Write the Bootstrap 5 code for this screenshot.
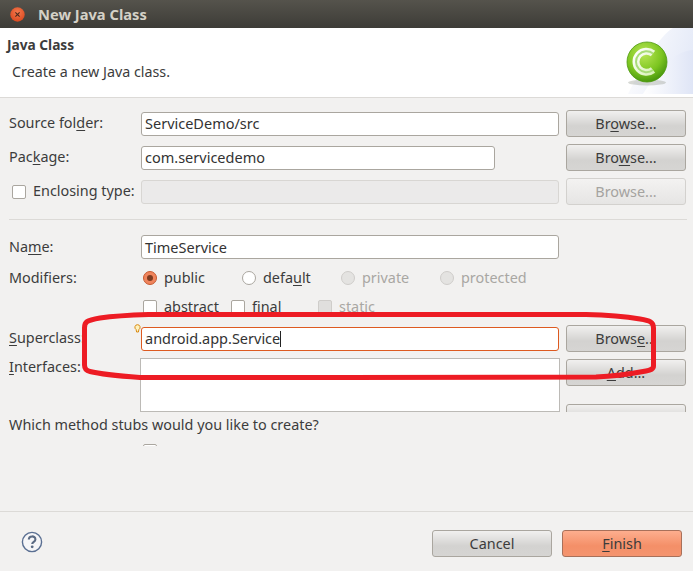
<!DOCTYPE html>
<html lang="en"><head><meta charset="utf-8"><title>New Java Class</title>
<link href="https://cdn.jsdelivr.net/npm/bootstrap@5.3.0/dist/css/bootstrap.min.css" rel="stylesheet">
<style>
html,body{margin:0;height:100%;background:#f2f1f0}
body{font-family:"Noto Sans","Open Sans",sans-serif;font-size:14.4px;color:#3c3c3c;line-height:1;overflow:hidden}
.dlg{position:relative;width:693px;height:571px}
.tbar{height:28px;background:linear-gradient(#55534c,#3d3c37);padding-left:10px;gap:13px}
.tbar b{font-weight:700;color:#d4d1c7;font-size:14.7px}
.xbtn{width:15px;height:15px;flex:none}
.banner{height:69px;background:#fff;position:relative;overflow:hidden;padding:9px 0 0 7px}
.banner h1{font-size:13.7px;font-weight:700;margin:0;color:#3c3c3c}
.banner p{margin:12px 0 0 5px;font-size:14.3px}
.swoosh{position:absolute;right:0;top:0}
.hr1{height:1px;background:#dcdad7;flex:none}
.form{height:413px;padding:12px 7px 0 9px;overflow:hidden;flex:none}
.frow{height:27px;margin-bottom:7px}
.lbl{width:132px;flex:none;white-space:nowrap}
.enc{padding-left:3px;gap:7px}
.fld{height:24px;width:418px;flex:none;border:1px solid #aaa69f;border-radius:3px;background:#fff;padding:0 3px;display:flex;align-items:center;font-size:14.5px;color:#333}
.fld.short{width:354px;margin-right:64px}
.fld.off{background:#ebeaea;border-color:#d8d6d3}
.fld.focus{border-color:#dd5a20}
.caret{display:inline-block;width:1px;height:16px;background:#222}
.wbtn{width:120px;height:27px;margin-left:7px;flex:none;border:1px solid #aaa69f;border-radius:3px;background:linear-gradient(#f1f0ef,#d3d2d0 60%,#d6d5d3);color:#3c3c3c;font-size:14.4px;padding:2px 0 0;line-height:1}
.wbtn.off{color:#a5a3a0;background:linear-gradient(#f3f2f1,#e6e5e4);border-color:#d3d1ce;opacity:1}
.wbtn.go{background:linear-gradient(#fdae8e,#f48f68 60%,#f4946f);border-color:#a8705a}
.sep{height:1px;background:#dcdad7;margin:14px 0;width:678px}
.rb,.cb{flex:none;display:inline-block;background:#fff;border:1px solid #aaa69f}
.rb{width:14px;height:14px;border-radius:50%;position:relative}
.rb.on{background:#f0845c;border-color:#c65a30}
.rb.on::after{content:"";position:absolute;left:3px;top:3px;width:6px;height:6px;border-radius:50%;background:#7d3b20}
.rb.off{background:#e4e3e1;border-color:#cfcdca}
.cb{width:14px;height:14px;border-radius:2px}
.cb.off{background:#e0dfdd;border-color:#cfcdca}
.dim{color:#a9a7a3}
.namerow{height:26px;margin-bottom:10px}
.mod{height:16px;margin-bottom:13px}
.mod.last{margin-bottom:10px}
.opts{margin-left:2px}
.opt{gap:7px}
.w99{width:99px}
.w88{width:88px}
.w87{width:87px}
.u{text-decoration:underline;text-underline-offset:2px}
.srow{margin-bottom:6px}
.irow{height:54px}
.ilbl{padding-top:2px}
.box{width:420px;height:54px;margin-left:-1px;margin-right:6px;flex:none;background:#fff;border:1px solid #bcbab6}
.bcol{overflow:hidden;height:54px}
.bcol .wbtn{margin-left:0;margin-top:1px}
.bcol .wbtn+.wbtn{margin-top:18px}
.qline{margin-top:6px}
.clip{height:2px;overflow:hidden;margin:12px 0 0 134px}
.clipin{gap:12px;white-space:nowrap;height:20px}
.cliptxt{padding-top:1px}
.foot{height:59px;flex:none;position:relative;padding:18px 11px 0 0}
.foot .wbtn{margin-left:10px}
.help{position:absolute;left:21px;top:19px}
.ink{position:absolute;left:0;top:0;pointer-events:none}
.bulb{position:absolute;left:134px;top:324px}
</style></head><body>
<div class="dlg d-flex flex-column">
 <div class="tbar d-flex align-items-center">
  <svg class="xbtn" viewBox="0 0 15 15"><defs><radialGradient id="xg" cx=".5" cy=".35" r=".7"><stop offset="0" stop-color="#f47a4e"/><stop offset="1" stop-color="#d8451c"/></radialGradient></defs><circle cx="7.5" cy="7.5" r="7.2" fill="url(#xg)"/><path d="M5.4 5.4l4.2 4.2M9.6 5.4l-4.2 4.2" stroke="#4a2a1c" stroke-width="1.1"/></svg>
  <b>New Java Class</b>
 </div>
 <div class="banner">
  <svg class="swoosh" width="70" height="66" viewBox="0 0 70 66"><defs><linearGradient id="sw" x1="0" y1="0" x2="1" y2=".3"><stop offset="0" stop-color="#fff"/><stop offset="1" stop-color="#e6ebf8"/></linearGradient><radialGradient id="gb" cx=".42" cy=".3" r=".75"><stop offset="0" stop-color="#b8e655"/><stop offset=".6" stop-color="#7cc520"/><stop offset="1" stop-color="#3f8f0a"/></radialGradient><linearGradient id="sw2" x1="0" y1="0" x2="1" y2="0"><stop offset="0" stop-color="#fff"/><stop offset="1" stop-color="#dfe5f6"/></linearGradient><linearGradient id="cg" x1="0" y1="0" x2="1" y2="1"><stop offset="0" stop-color="#fff"/><stop offset="1" stop-color="#d9f2b8"/></linearGradient></defs>
   <path d="M70 0H50C36 8 18 40 5 66H70Z" fill="url(#sw)"/>
   <path d="M70 22C55 23 40 34 20 66H70Z" fill="url(#sw2)"/>
   <ellipse cx="24" cy="54.5" rx="19" ry="3" fill="#9aa096" opacity=".4"/>
   <circle cx="24" cy="34" r="20" fill="url(#gb)" stroke="#4f9a12" stroke-width=".8"/>
   <path d="M30 25.5A10.500 10.500 0 1 0 30 42" fill="none" stroke="url(#cg)" stroke-width="7"/>
   <path d="M30 25.5A10.500 10.500 0 1 0 30 42" fill="none" stroke="#a8dc78" stroke-width="2"/>
  </svg>
  <h1>Java Class</h1>
  <p>Create a new Java class.</p>
 </div>
 <div class="hr1"></div>
 <div class="form">
  <div class="frow d-flex align-items-center"><span class="lbl">Source fol<span class="u">d</span>er:</span><div class="fld">ServiceDemo/src</div><button class="btn wbtn" type="button">Br<span class="u">o</span>wse...</button></div>
  <div class="frow d-flex align-items-center"><span class="lbl">Pac<span class="u">k</span>age:</span><div class="fld short">com.servicedemo</div><button class="btn wbtn" type="button">Bro<span class="u">w</span>se...</button></div>
  <div class="frow d-flex align-items-center mb-0"><span class="lbl enc d-flex align-items-center"><i class="cb"></i><span>Enclosing type:</span></span><div class="fld off"></div><button class="btn wbtn off" type="button">Browse...</button></div>
  <div class="sep"></div>
  <div class="namerow d-flex align-items-center"><span class="lbl">Na<span class="u">m</span>e:</span><div class="fld">TimeService</div></div>
  <div class="mod d-flex align-items-center"><span class="lbl">Modifiers:</span>
    <div class="opts d-flex align-items-center">
    <span class="opt d-flex align-items-center w99"><i class="rb on"></i><span>public</span></span>
    <span class="opt d-flex align-items-center w99"><i class="rb"></i><span>defa<span class="u">u</span>lt</span></span>
    <span class="opt d-flex align-items-center w99 dim"><i class="rb off"></i><span>private</span></span>
    <span class="opt d-flex align-items-center dim"><i class="rb off"></i><span>protected</span></span></div></div>
  <div class="mod last d-flex align-items-center"><span class="lbl"></span>
    <div class="opts d-flex align-items-center">
    <span class="opt d-flex align-items-center w88"><i class="cb"></i><span>abstract</span></span>
    <span class="opt d-flex align-items-center w87"><i class="cb"></i><span>final</span></span>
    <span class="opt d-flex align-items-center dim"><i class="cb off"></i><span>static</span></span></div></div>
  <div class="frow srow d-flex align-items-center"><span class="lbl"><span class="u">S</span>uperclass:</span><div class="fld focus">android.app.Service<i class="caret"></i></div><button class="btn wbtn" type="button">Brows<span class="u">e</span>...</button></div>
  <div class="irow d-flex"><span class="lbl ilbl"><span class="u">I</span>nterfaces:</span><div class="box"></div>
    <div class="bcol d-flex flex-column"><button class="btn wbtn" type="button"><span class="u">A</span>dd...</button><button class="btn wbtn" type="button"></button></div></div>
  <div class="qline">Which method stubs would you like to create?</div>
  <div class="clip"><div class="clipin d-flex"><i class="cb"></i><span class="cliptxt">public static void main(String[] args)</span></div></div>
 </div>
 <div class="hr1"></div>
 <div class="foot d-flex justify-content-end">
  <svg class="help" width="22" height="22" viewBox="0 0 22 22"><circle cx="11" cy="11" r="9.6" fill="#f6f6f8" stroke="#5a6f92" stroke-width="1.4"/><path d="M7.8 8.6c0-4.2 6.6-4.2 6.6-.2 0 2.4-3.2 2.4-3.2 4.6" fill="none" stroke="#5b6b84" stroke-width="2.1"/><circle cx="11.2" cy="15.8" r="1.4" fill="#5b6b84"/></svg>
  <button class="btn wbtn" type="button">Cancel</button>
  <button class="btn wbtn go" type="button"><span class="u">F</span>inish</button>
 </div>
 <svg class="bulb" width="7" height="10" viewBox="0 0 7 10"><path d="M3.5 .7a2.6 2.6 0 0 1 1.4 4.8L4.4 8H2.6L2.1 5.5A2.6 2.6 0 0 1 3.5 .7Z" fill="#fdf3c0" stroke="#d98a12"/></svg>
 <svg class="ink" width="693" height="571" viewBox="0 0 693 571"><path d="M346 314.5H586C606 315 625 316.5 640 319 650 320.5 653.5 322 653.5 328V366C653.5 369 651 370 646 371 630 374 610 376.5 596 377L346 377.5H140C120 376 100 374 90 371.5 85.5 370.5 84.5 368 84.5 365V328C84.5 322 86 320.5 100 318 118 315.5 135 315 150 314.5Z" fill="none" stroke="#ed1c24" stroke-width="5" stroke-linejoin="round"/></svg>
</div>
</body></html>
